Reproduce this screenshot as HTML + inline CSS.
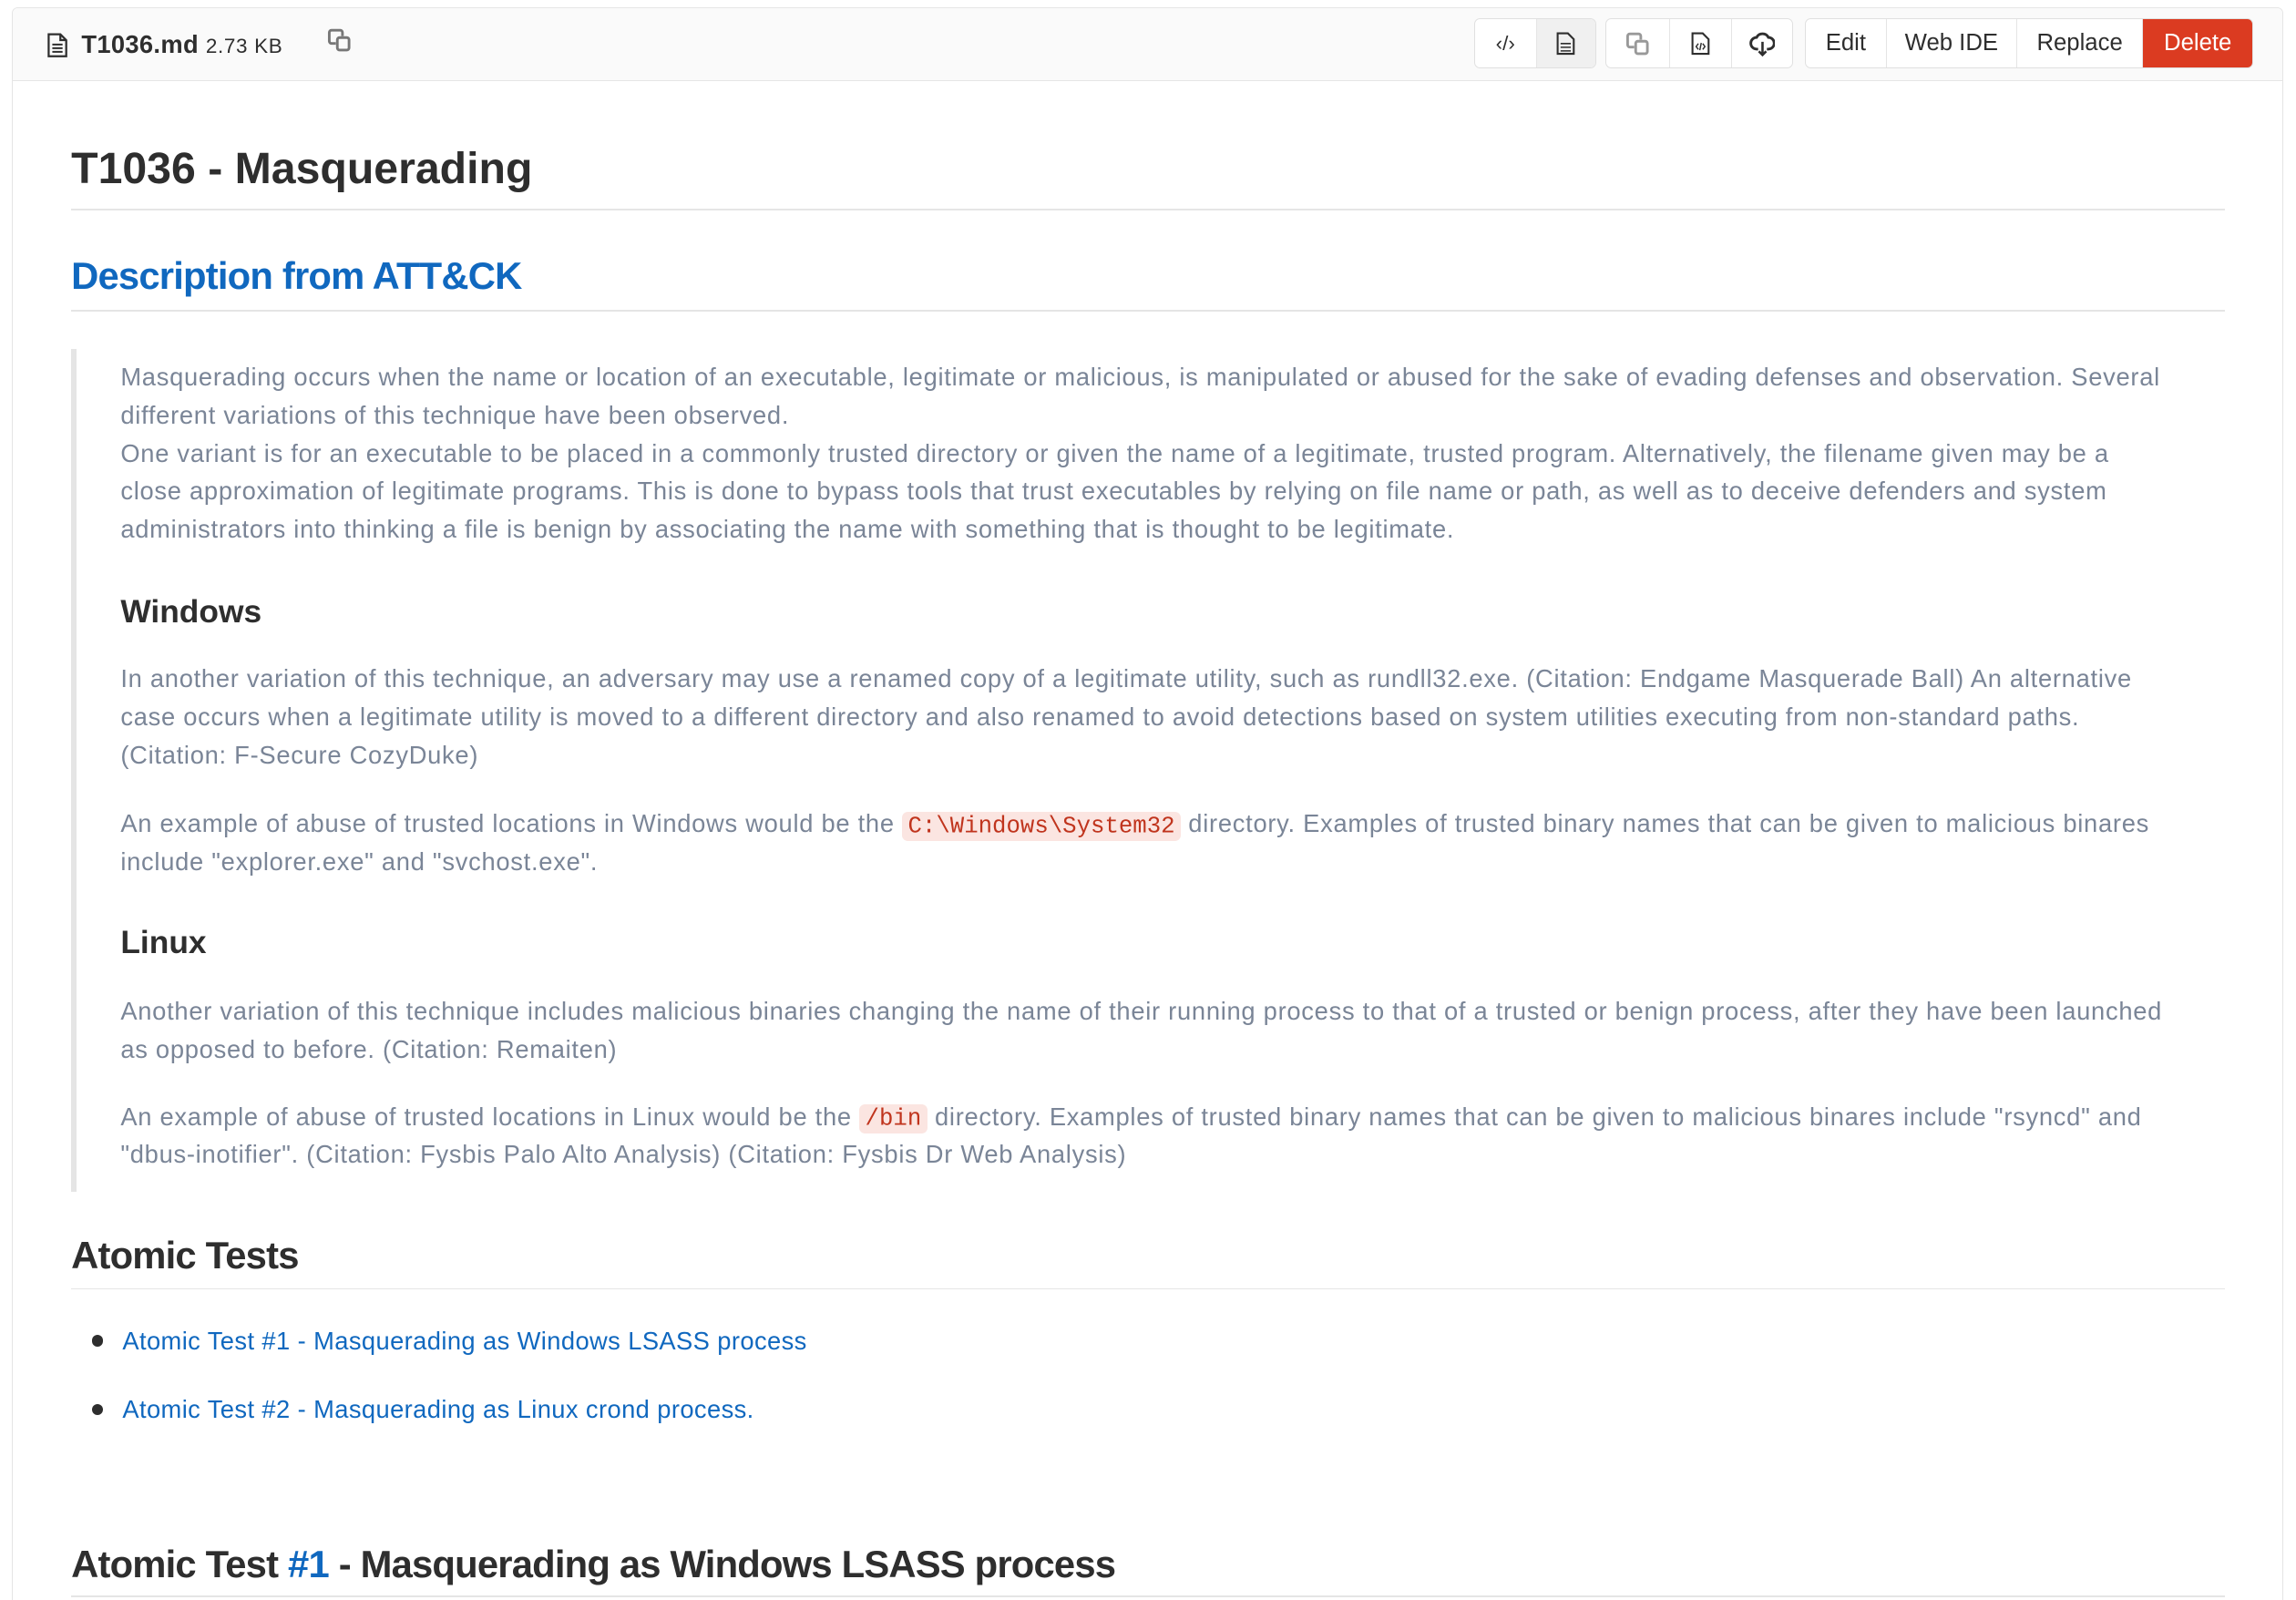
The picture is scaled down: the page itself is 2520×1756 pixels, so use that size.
<!DOCTYPE html>
<html><head><meta charset="utf-8"><style>
html,body{margin:0;padding:0;background:#fff}
html{height:1756px;overflow:hidden}
body{zoom:1.6071;width:1568px;height:1092px;overflow:hidden;font-family:"Liberation Sans",sans-serif;color:#2e2e2e;position:relative}
.box{position:absolute;left:8px;top:5px;width:1550px;height:1100px;border:1px solid #e5e5e5;border-radius:4px;overflow:hidden}
.hdr{height:49px;background:#fafafa;border-bottom:1px solid #e5e5e5;position:relative;border-radius:4px 4px 0 0}
.fname{position:absolute;left:23px;top:15px;font-size:17px;font-weight:bold;color:#2e2e2e;white-space:nowrap;letter-spacing:.2px}
.fname small{font-size:14px;font-weight:normal;letter-spacing:.4px}
.grp{position:absolute;top:7px;height:33px;border:1px solid #e0e0e0;border-radius:4px;background:#fff;display:flex;overflow:hidden}
.grp div{border-right:1px solid #e5e5e5;display:flex;align-items:center;justify-content:center;font-size:16px;color:#2e2e2e}
.grp div:last-child{border-right:none}
.c{position:absolute;left:40px;width:1471px}
h1,h2,h3{margin:0;position:absolute;left:0;font-weight:bold;white-space:nowrap}
h2{letter-spacing:-0.5px}
.rule{position:absolute;left:0;width:1471px;height:1px;background:#e5e5e5}
.bq{position:absolute;left:0;top:183px;width:1471px;height:575px;border-left:4px solid #e5e5e5}
.p{position:absolute;left:30px;width:1400px;font-size:17px;line-height:26px;color:#7a8597;letter-spacing:.45px}
code{font-family:"Liberation Mono",monospace;font-size:16px;line-height:20px;background:#fbe5e1;color:#c0341d;padding:1px 4px;border-radius:4px;letter-spacing:0}
a{color:#1068bf;text-decoration:none}
</style></head><body>
<div class="box">
 <div class="hdr">
  <svg style="position:absolute;left:23px;top:17px" width="15" height="17" viewBox="0 0 15 17"><path d="M1.5 1h8l4 4v11h-12z M9.5 1v4h4" fill="none" stroke="#2e2e2e" stroke-width="1.4"/><path d="M4 8h7M4 10.5h7M4 13h7" stroke="#2e2e2e" stroke-width="1.2"/></svg>
  <div class="fname" style="left:47px">T1036.md <small>2.73 KB</small></div>
  <svg style="position:absolute;left:215px;top:13px" width="17" height="17" viewBox="0 0 17 17"><path d="M6 11H3a1.5 1.5 0 0 1-1.5-1.5v-6A1.5 1.5 0 0 1 3 2h6a1.5 1.5 0 0 1 1.5 1.5V6" fill="none" stroke="#777" stroke-width="1.8"/><rect x="7" y="7" width="8" height="8.5" rx="1.5" fill="none" stroke="#777" stroke-width="1.8"/></svg>
  <div class="grp" style="left:998px;width:82px"><div style="width:42px;font-size:14px">&lsaquo;/&rsaquo;</div><div style="width:40px;background:#f0f0f0"><svg width="13" height="16" viewBox="0 0 13 16"><path d="M1 1h7l4 4v10H1z" fill="none" stroke="#2e2e2e" stroke-width="1.3"/><path d="M3 8h7M3 10.5h7M3 13h7" stroke="#2e2e2e"/></svg></div></div>
  <div class="grp" style="left:1088px;width:127px"><div style="width:43px"><svg width="17" height="17" viewBox="0 0 17 17"><path d="M6 11H3a1.5 1.5 0 0 1-1.5-1.5v-6A1.5 1.5 0 0 1 3 2h6a1.5 1.5 0 0 1 1.5 1.5V6" fill="none" stroke="#999" stroke-width="1.8"/><rect x="7" y="7" width="8" height="8.5" rx="1.5" fill="none" stroke="#999" stroke-width="1.8"/></svg></div><div style="width:42px"><svg width="13" height="16" viewBox="0 0 13 16"><path d="M1 1h7l4 4v10H1z" fill="none" stroke="#2e2e2e" stroke-width="1.3"/><path d="M5 8l-1.5 2 1.5 2M8 8l1.5 2L8 12M7 7.5l-1 5" fill="none" stroke="#2e2e2e" stroke-width=".9"/></svg></div><div style="width:42px"><svg width="18" height="18" viewBox="0 0 18 18"><path d="M6 13H5a4 4 0 0 1 0-8 4.5 4.5 0 0 1 8 0 4 4 0 0 1 0 8h-1" fill="none" stroke="#2e2e2e" stroke-width="1.8"/><path d="M9 8v9M6.5 14.5L9 17l2.5-2.5" fill="none" stroke="#2e2e2e" stroke-width="1.6"/></svg></div></div>
  <div class="grp" style="left:1224px;width:305px"><div style="width:55px">Edit</div><div style="width:89px">Web IDE</div><div style="width:86px">Replace</div><div style="width:75px;background:#db3b21;color:#fff">Delete</div></div>
 </div>
 <div class="c" style="top:50px">
  <h1 style="top:42px;font-size:30px;color:#2e2e2e">T1036 - Masquerading</h1>
  <div class="rule" style="top:87px"></div>
  <h2 style="top:118px;font-size:26px;color:#1068bf">Description from ATT&amp;CK</h2>
  <div class="rule" style="top:156px"></div>
  <div class="bq">
   <div class="p" style="top:6px">Masquerading occurs when the name or location of an executable, legitimate or malicious, is manipulated or abused for the sake of evading defenses and observation. Several different variations of this technique have been observed.<br>One variant is for an executable to be placed in a commonly trusted directory or given the name of a legitimate, trusted program. Alternatively, the filename given may be a close approximation of legitimate programs. This is done to bypass tools that trust executables by relying on file name or path, as well as to deceive defenders and system administrators into thinking a file is benign by associating the name with something that is thought to be legitimate.</div>
   <h3 style="left:30px;top:167px;font-size:22px;color:#2e2e2e">Windows</h3>
   <div class="p" style="top:212px">In another variation of this technique, an adversary may use a renamed copy of a legitimate utility, such as rundll32.exe. (Citation: Endgame Masquerade Ball) An alternative case occurs when a legitimate utility is moved to a different directory and also renamed to avoid detections based on system utilities executing from non-standard paths. (Citation: F-Secure CozyDuke)</div>
   <div class="p" style="top:311px">An example of abuse of trusted locations in Windows would be the <code>C:\Windows\System32</code> directory. Examples of trusted binary names that can be given to malicious binares include "explorer.exe" and "svchost.exe".</div>
   <h3 style="left:30px;top:393px;font-size:22px;color:#2e2e2e">Linux</h3>
   <div class="p" style="top:439px">Another variation of this technique includes malicious binaries changing the name of their running process to that of a trusted or benign process, after they have been launched as opposed to before. (Citation: Remaiten)</div>
   <div class="p" style="top:511px">An example of abuse of trusted locations in Linux would be the <code>/bin</code> directory. Examples of trusted binary names that can be given to malicious binares include "rsyncd" and "dbus-inotifier". (Citation: Fysbis Palo Alto Analysis) (Citation: Fysbis Dr Web Analysis)</div>
  </div>
  <h2 style="top:787px;font-size:26px">Atomic Tests</h2>
  <div class="rule" style="top:824px"></div>
  <div style="position:absolute;left:14px;top:856px;width:8px;height:8px;border-radius:50%;background:#2e2e2e"></div>
  <div class="p" style="left:35px;top:847px;color:#1068bf;white-space:nowrap;letter-spacing:.25px">Atomic Test #1 - Masquerading as Windows LSASS process</div>
  <div style="position:absolute;left:14px;top:903px;width:8px;height:8px;border-radius:50%;background:#2e2e2e"></div>
  <div class="p" style="left:35px;top:894px;color:#1068bf;white-space:nowrap;letter-spacing:.25px">Atomic Test #2 - Masquerading as Linux crond process.</div>
  <h2 style="top:998px;font-size:26px">Atomic Test <a>#1</a> - Masquerading as Windows LSASS process</h2>
  <div class="rule" style="top:1034px"></div>
 </div>
</div>
</body></html>
